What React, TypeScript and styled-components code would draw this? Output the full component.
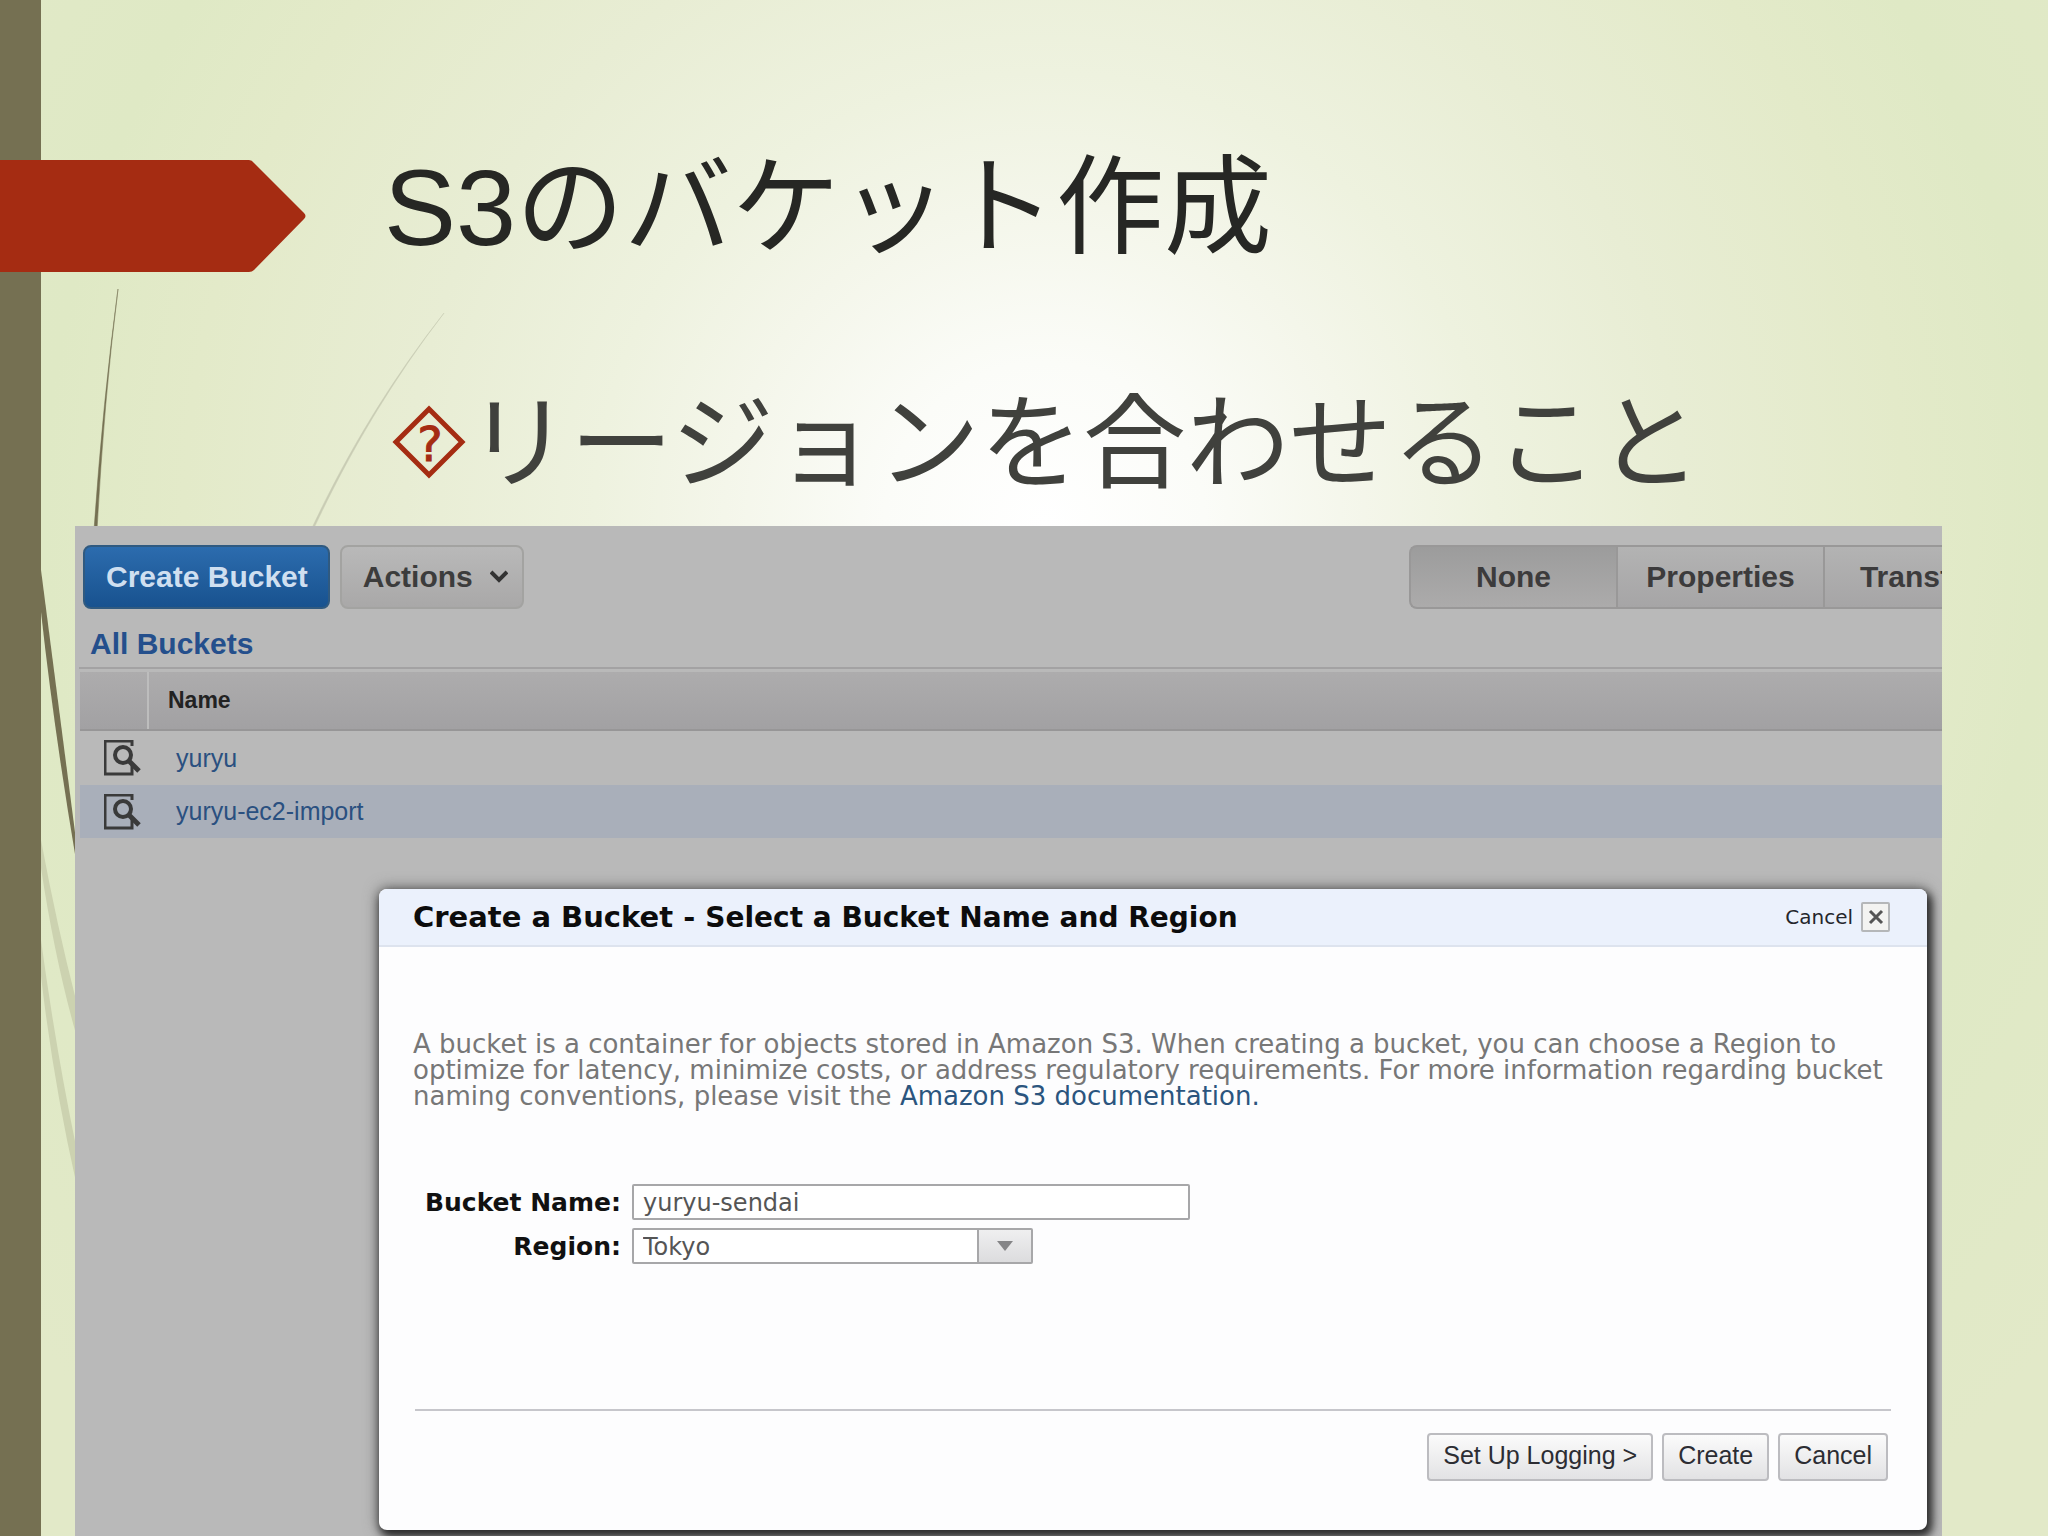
import React, { useState } from "react";
import styled, { createGlobalStyle } from "styled-components";

const sans = `"Liberation Sans", "Noto Sans CJK JP", Arial, sans-serif`;
const wide = `"DejaVu Sans", Verdana, "Noto Sans CJK JP", sans-serif`;

const GlobalStyle = createGlobalStyle`
  * { box-sizing: border-box; }
  body { margin: 0; font-family: ${sans}; }
  button, input, select { font-family: inherit; margin: 0; }
`;

const Slide = styled.main`
  position: relative;
  display: flex;
  flex-direction: column;
  min-height: 100vh;
  overflow: hidden;
  background:
    linear-gradient(to right, #757052 41px, transparent 41px),
    radial-gradient(circle at 51% 34%, #ffffff 0, #fbfcf8 160px, #f4f6ea 320px, #eef2df 450px, #e8edd4 640px, #e3eac9 860px, #dfe9c5 1000px, #e2e9c8 1300px);
`;

const Wisps = styled.svg`
  position: absolute;
  left: 0;
  top: 0;
`;

const Header = styled.header`
  position: relative;
  display: flex;
  align-items: center;
  gap: 78px;
  padding-top: 159px;
`;

const Title = styled.h1`
  margin: 0;
  padding-bottom: 16px;
  font-family: "Liberation Sans", "Noto Sans CJK JP", sans-serif;
  font-size: 108px;
  line-height: 98px;
  font-weight: 400;
  color: #262724;
`;

const Points = styled.ul`
  position: relative;
  margin: 0;
  padding: 108px 0 24px 391px;
  list-style: none;
`;

const Point = styled.li`
  display: flex;
  align-items: center;
  height: 121px;
  font-family: "Noto Sans CJK JP", sans-serif;
  font-size: 103px;
  line-height: 108px;
  font-weight: 400;
  color: #40413d;
  span { padding-bottom: 12px; }
`;

const Console = styled.section`
  position: relative;
  flex: 1;
  margin: 0 106px 0 75px;
  padding: 19px 0 7px;
  overflow: hidden;
  background: #b9b9b9;
`;

const Toolbar = styled.div`
  display: flex;
  gap: 10px;
  padding-left: 8px;
`;

const ToolButton = styled.button<{ $primary?: boolean }>`
  display: flex;
  align-items: center;
  justify-content: center;
  gap: 17px;
  height: 64px;
  padding: 0 ${(p) => (p.$primary ? 20 : 14)}px 0 21px;
  border: 2px solid ${(p) => (p.$primary ? "#305a80" : "#a3a3a1")};
  border-radius: 8px;
  background: ${(p) => (p.$primary ? "linear-gradient(#2c6cae, #18528f)" : "linear-gradient(#b9b9b9, #a9a8a8)")};
  color: ${(p) => (p.$primary ? "#cfdff0" : "#3c3c3c")};
  font-size: 30px;
  font-weight: 700;
  white-space: nowrap;
`;

const Tabs = styled.div`
  display: flex;
  flex: 0 1 533px;
  margin-left: auto;
  overflow: hidden;
`;

const Tab = styled.button<{ $active?: boolean }>`
  flex: none;
  width: 207px;
  height: 64px;
  padding: 0;
  border: 2px solid #999898;
  border-right-width: 0;
  background: ${(p) => (p.$active ? "linear-gradient(#9c9c9c, #acabab)" : "linear-gradient(#b3b3b3, #a6a5a6)")};
  color: #3c3b3c;
  font-size: 30px;
  font-weight: 700;
  &:first-child { border-radius: 8px 0 0 8px; }
`;

const Crumb = styled.a`
  display: block;
  padding: 16px 0 0 15px;
  font-size: 30px;
  line-height: 38px;
  font-weight: 700;
  color: #244f8c;
  text-decoration: none;
`;

const Rule = styled.hr`
  height: 2px;
  margin: 4px 0 3px 4px;
  border: 0;
  background: #a3a2a3;
`;

const TableWrap = styled.div`
  padding-left: 5px;
`;

const Table = styled.table`
  width: 100%;
  border-collapse: collapse;
  table-layout: fixed;
  td, th { padding: 0; text-align: left; }
  th { height: 58px; border-bottom: 2px solid #979697; background: linear-gradient(#adacad, #a2a1a3); }
  th:first-child { width: 68px; border-right: 2px solid #bdbdbd; }
`;

const HeadCell = styled.th`
  && { padding-left: 19px; }
  font-size: 23px;
  color: #222;
`;

const Row = styled.tr<{ $selected?: boolean }>`
  height: ${(p) => (p.$selected ? 53 : 55)}px;
  background: ${(p) => (p.$selected ? "#a9afba" : "transparent")};
  td:first-child { padding-left: 24px; }
  td:last-child { padding-left: 28px; }
  svg { display: block; }
  a { font-size: 25px; color: #2a5080; text-decoration: none; }
`;

const Dialog = styled.form`
  margin: 51px 15px 0 304px;
  border-radius: 8px;
  background: #fdfdfe;
  font-family: ${wide};
  box-shadow: 3px 5px 8px 2px #2c2c2c, 0 0 14px 2px #777;
`;

const DialogHead = styled.div`
  display: flex;
  align-items: center;
  justify-content: space-between;
  height: 58px;
  padding: 0 37px 0 34px;
  border-bottom: 2px solid #dde3ee;
  border-radius: 8px 8px 0 0;
  background: #ebf1fc;
`;

const DialogTitle = styled.h2`
  margin: 0;
  font-size: 29px;
  line-height: 36px;
  color: #0c0c0c;
  white-space: nowrap;
  small { font-size: 28px; }
  i { font-style: normal; }
`;

const Dismiss = styled.button`
  display: flex;
  align-items: center;
  gap: 8px;
  padding: 0;
  border: 0;
  background: none;
  font-size: 20px;
  color: #24262c;
`;

const CloseBox = styled.span`
  display: grid;
  place-items: center;
  width: 29px;
  height: 30px;
  border: 2px solid #b5b7b9;
  border-radius: 2px;
  background: #f3f3f1;
`;

const Intro = styled.p`
  margin: 0;
  padding: 84px 34px 0;
  font-size: 26px;
  line-height: 26px;
  color: #777;
  white-space: nowrap;
  a { color: #2b557e; text-decoration: none; }
`;

const Fields = styled.div`
  display: grid;
  grid-template-columns: 208px 1fr;
  align-items: center;
  gap: 8px 11px;
  padding: 75px 34px 0;
`;

const Label = styled.label`
  text-align: right;
  font-size: 25px;
  font-weight: 700;
  color: #111;
  white-space: nowrap;
`;

const TextInput = styled.input`
  width: 558px;
  height: 36px;
  padding: 2px 9px 0;
  border: 2px solid #a7a7a9;
  border-radius: 2px;
  background: #fff;
  font-size: 24px;
  color: #555;
`;

const SelectBox = styled.span`
  display: grid;
  grid-template-columns: 1fr 54px;
  width: 401px;
  height: 36px;
  border: 2px solid #a7a7a9;
  border-radius: 2px;
  background: #fff;
`;

const Select = styled.select`
  grid-area: 1 / 1 / 2 / 3;
  appearance: none;
  padding: 2px 9px 0;
  border: 0;
  background: transparent;
  font-size: 24px;
  color: #555;
`;

const SelectArrow = styled.span`
  grid-area: 1 / 2;
  display: grid;
  place-items: center;
  border-left: 2px solid #a7a7a9;
  background: linear-gradient(#efeff0, #dcdcde);
  pointer-events: none;
`;

const Footer = styled.div`
  display: flex;
  justify-content: flex-end;
  gap: 9px;
  margin: 145px 36px 0;
  padding: 22px 3px 49px;
  border-top: 2px solid #c6c6cb;
`;

const FootButton = styled.button`
  height: 48px;
  padding: 0 14px 4px;
  border: 2px solid #bcbcc0;
  border-radius: 4px;
  background: linear-gradient(#fbfbfb, #e2e2e4);
  && { font-family: ${sans}; }
  font-size: 25px;
  color: #2c2d33;
`;

const Bullet = () => (
  <svg width="76" height="76" viewBox="0 0 76 76" aria-hidden="true">
    <path d="M38 5 L71 38 L38 71 L5 38 Z" fill="none" stroke="#a52c12" strokeWidth="5" />
    <text x="39" y="57" textAnchor="middle" fontFamily="DejaVu Sans, sans-serif" fontSize="48" fill="#a52c12" stroke="#a52c12" strokeWidth="1">?</text>
  </svg>
);

const InspectIcon = () => (
  <svg width="38" height="36" viewBox="0 0 38 36" fill="none" stroke="#3a3a3a" aria-hidden="true">
    <path d="M28 25 V34 H1 V1 H28 V6" strokeWidth="3" />
    <circle cx="19" cy="15" r="8" strokeWidth="4" />
    <path d="M25 21 L35 31" strokeWidth="5" />
  </svg>
);

const buckets = ["yuryu", "yuryu-ec2-import"];
const tabs = ["None", "Properties", "Transfers"];

export default function App() {
  const [name, setName] = useState("yuryu-sendai");
  return (
    <Slide>
      <GlobalStyle />
      <Wisps width="480" height="1536" viewBox="0 0 480 1536" aria-hidden="true">
        <path d="M118 289 Q103 400 94 530 H97 Q104 400 118 289" fill="#757052" stroke="#757052" strokeWidth="0.5" />
        <path d="M444 313 Q366 412 311 530 H313 Q368 412 444 313" fill="#c9ccb4" stroke="#c9ccb4" strokeWidth="0.5" />
        <path d="M41 570 L76 840 V860 Q54 730 41 612 Z" fill="#757052" />
        <path d="M41 840 Q57 926 76 1000 V1034 Q55 960 41 868 Z" fill="#ccd2b0" />
        <path d="M41 940 Q56 1050 76 1146 V1182 Q53 1080 41 976 Z" fill="#ccd2b0" />
      </Wisps>
      <Header>
        <svg width="306" height="114" viewBox="0 0 306 114" aria-hidden="true">
          <path d="M0 1 H249 Q252 1 254 4 L304 54 Q307 57 304 60 L254 111 Q252 113 249 113 H0 Z" fill="#a52c12" />
        </svg>
        <Title>S3のバケット作成</Title>
      </Header>
      <Points>
        <Point><Bullet /><span>リージョンを合わせること</span></Point>
      </Points>
      <Console>
        <Toolbar>
          <ToolButton $primary type="button">Create Bucket</ToolButton>
          <ToolButton type="button">
            Actions
            <svg width="18" height="14" viewBox="0 0 18 14" fill="none" stroke="#333" strokeWidth="4" aria-hidden="true"><path d="M1 2 L9 10 L17 2" /></svg>
          </ToolButton>
          <Tabs>
            {tabs.map((t, i) => <Tab key={t} type="button" $active={i === 0}>{t}</Tab>)}
          </Tabs>
        </Toolbar>
        <Crumb href="#buckets">All Buckets</Crumb>
        <Rule />
        <TableWrap>
          <Table>
            <thead><tr><th aria-label="Details" /><HeadCell>Name</HeadCell></tr></thead>
            <tbody>
              {buckets.map((b, i) => (
                <Row key={b} $selected={i === 1}>
                  <td><InspectIcon /></td>
                  <td><a href={"#" + b}>{b}</a></td>
                </Row>
              ))}
            </tbody>
          </Table>
        </TableWrap>
        <Dialog onSubmit={(e) => e.preventDefault()}>
          <DialogHead>
            <DialogTitle>Create a Bucket <i>-</i> <small>Select a Bucket Name and Region</small></DialogTitle>
            <Dismiss type="button">
              Cancel
              <CloseBox>
                <svg width="16" height="16" viewBox="0 0 16 16" stroke="#555" strokeWidth="3" aria-hidden="true"><path d="M2 2 L14 14 M14 2 L2 14" /></svg>
              </CloseBox>
            </Dismiss>
          </DialogHead>
          <Intro>
            A bucket is a container for objects stored in Amazon S3. When creating a bucket, you can choose a Region to<br />
            optimize for latency, minimize costs, or address regulatory requirements. For more information regarding bucket<br />
            naming conventions, please visit the <a href="#documentation">Amazon S3 documentation.</a>
          </Intro>
          <Fields>
            <Label htmlFor="bucket-name">Bucket Name:</Label>
            <TextInput id="bucket-name" value={name} onChange={(e) => setName(e.target.value)} />
            <Label htmlFor="region">Region:</Label>
            <SelectBox>
              <SelectArrow>
                <svg width="16" height="10" viewBox="0 0 16 10" aria-hidden="true"><path d="M0 0 H16 L8 10 Z" fill="#858587" /></svg>
              </SelectArrow>
              <Select id="region" defaultValue="Tokyo"><option>Tokyo</option></Select>
            </SelectBox>
          </Fields>
          <Footer>
            <FootButton type="button">Set Up Logging &gt;</FootButton>
            <FootButton type="submit">Create</FootButton>
            <FootButton type="button">Cancel</FootButton>
          </Footer>
        </Dialog>
      </Console>
    </Slide>
  );
}
